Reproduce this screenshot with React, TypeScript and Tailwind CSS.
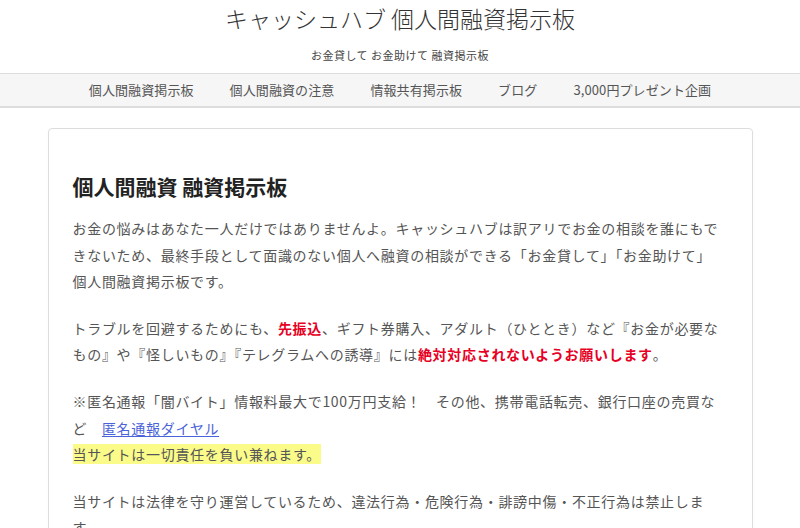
const font = { fontFamily: '"Noto Sans CJK JP", "Noto Sans", sans-serif' };

const navItems = [
  "個人間融資掲示板",
  "個人間融資の注意",
  "情報共有掲示板",
  "ブログ",
  "3,000円プレゼント企画",
];

const App = () => {
  return (
    <div className="min-h-[528px] bg-white text-[#555]" style={font}>
      <header className="pt-[4px] text-center">
        <h1 className="text-[23px] leading-[28px] font-extralight text-[#333]">
          キャッシュハブ 個人間融資掲示板
        </h1>
        <p className="mt-[15px] mb-[10px] text-[11px] leading-[16px] tracking-[0.5px] text-[#444]">
          お金貸して お金助けて 融資掲示板
        </p>
      </header>

      <nav className="h-[35px] border-t border-b-2 border-[#dddddd] bg-[#f6f6f6] flex justify-center items-center">
        {navItems.map((item) => (
          <a
            key={item}
            href="#"
            className="px-[18px] text-[13px] leading-[20px] text-[#555] tracking-[0.1px]"
          >
            {item}
          </a>
        ))}
      </nav>

      <main className="mt-[20px] mx-auto w-[705px] border border-[#dddddd] rounded-[4px] shadow-[0_1px_2px_rgba(0,0,0,0.04)] px-[24px] pt-[42px] pb-[40px]">
        <h2 className="text-[21px] leading-[30px] font-bold text-[#222]">
          個人間融資 融資掲示板
        </h2>

        <div className="mt-[14px] text-[14px] leading-[26.6px] tracking-[0.7px] whitespace-nowrap">
          <p className="mb-[20px]">
            お金の悩みはあなた一人だけではありませんよ。キャッシュハブは訳アリでお金の相談を誰にもで
            <br />
            きないため、最終手段として面識のない個人へ融資の相談ができる「お金貸して」「お金助けて」
            <br />
            個人間融資掲示板です。
          </p>

          <p className="mb-[20px]">
            トラブルを回避するためにも、
            <b className="font-bold text-[#e60023]">先振込</b>
            、ギフト券購入、アダルト（ひととき）など『お金が必要な
            <br />
            もの』や『怪しいもの』『テレグラムへの誘導』には
            <b className="font-bold text-[#e60023]">絶対対応されないようお願いします</b>
            。
          </p>

          <p className="mb-[20px]">
            {"※匿名通報「闇バイト」情報料最大で100万円支給！\u3000その他、携帯電話転売、銀行口座の売買な"}
            <br />
            {"ど\u3000"}
            <a href="#" className="text-[#4a63d8] underline underline-offset-2">
              匿名通報ダイヤル
            </a>
            <br />
            <span className="bg-[#fbfb8a] text-[#555]">当サイトは一切責任を負い兼ねます。</span>
          </p>

          <p>
            当サイトは法律を守り運営しているため、違法行為・危険行為・誹謗中傷・不正行為は禁止しま
            <br />
            す。
          </p>
        </div>
      </main>
    </div>
  );
};

export default App;
